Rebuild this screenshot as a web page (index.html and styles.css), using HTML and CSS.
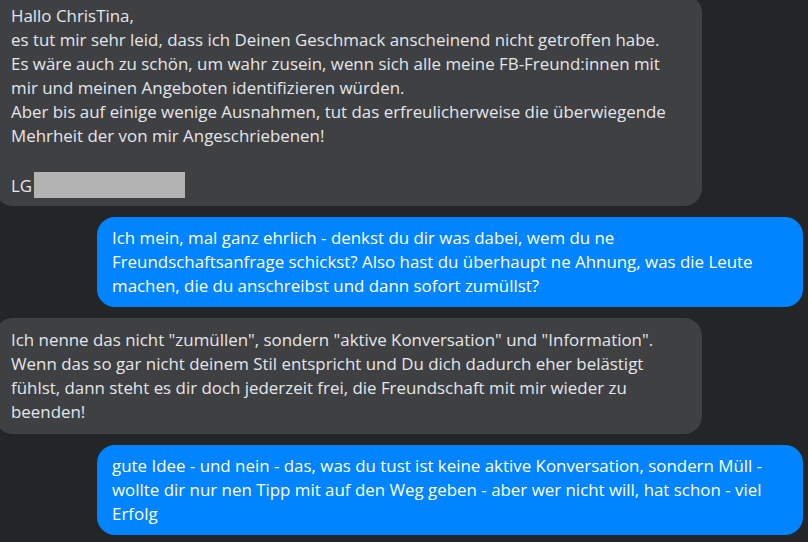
FILE: index.html
```html
<!DOCTYPE html>
<html lang="de">
<head>
    <meta charset="UTF-8">
    <meta name="viewport" content="width=device-width, initial-scale=1.0">
    <title>Chat</title>
    <link rel="stylesheet" href="styles.css">
</head>
<body>
    <div class="thread">

        <div class="msg msg-in first">
            Hallo ChrisTina,<br>
            es tut mir sehr leid, dass ich Deinen Geschmack anscheinend nicht getroffen habe.<br>
            Es wäre auch zu schön, um wahr zusein, wenn sich alle meine FB-Freund:innen mit<br>
            mir und meinen Angeboten identifizieren würden.<br>
            Aber bis auf einige wenige Ausnahmen, tut das erfreulicherweise die überwiegende<br>
            Mehrheit der von mir Angeschriebenen!<br>
            <br>
            LG <span class="redacted"></span>
        </div>

        <div class="msg msg-out">
            Ich mein, mal ganz ehrlich - denkst du dir was dabei, wem du ne<br>
            Freundschaftsanfrage schickst? Also hast du überhaupt ne Ahnung, was die Leute<br>
            machen, die du anschreibst und dann sofort zumüllst?
        </div>

        <div class="msg msg-in reply">
            Ich nenne das nicht "zumüllen", sondern "aktive Konversation" und "Information".<br>
            Wenn das so gar nicht deinem Stil entspricht und Du dich dadurch eher belästigt<br>
            fühlst, dann steht es dir doch jederzeit frei, die Freundschaft mit mir wieder zu<br>
            beenden!
        </div>

        <div class="msg msg-out">
            gute Idee - und nein - das, was du tust ist keine aktive Konversation, sondern Müll -<br>
            wollte dir nur nen Tipp mit auf den Weg geben - aber wer nicht will, hat schon - viel<br>
            Erfolg
        </div>

    </div>
</body>
</html>
```

FILE: styles.css
```css
body {
    margin: 0;
    background-color: #242526;
    font-family: 'Open Sans', 'Noto Sans', sans-serif;
    font-size: 16.9px;
    overflow: hidden;
}
.thread {
    display: flex;
    flex-direction: column;
    gap: 11px;
    margin-top: -5px;
}
.msg {
    box-sizing: border-box;
    width: 706px;
    padding: 9px 15px;
    line-height: 24px;
    border-radius: 18px;
    white-space: nowrap;
}
.msg-in {
    align-self: flex-start;
    margin-left: -5px;
    padding-left: 16px;
    width: 707px;
    background-color: #3e4042;
    color: #e4e6eb;
}
.msg-out {
    align-self: flex-end;
    margin-right: 5px;
    background-color: #0084ff;
    color: #ffffff;
}
.first {
    padding-bottom: 8px;
}
.reply {
    padding-top: 10px;
    padding-bottom: 10px;
}
.redacted {
    display: inline-block;
    width: 151px;
    height: 26px;
    margin-left: -3px;
    vertical-align: -6px;
    background-color: #b3b3b3;
}
```
